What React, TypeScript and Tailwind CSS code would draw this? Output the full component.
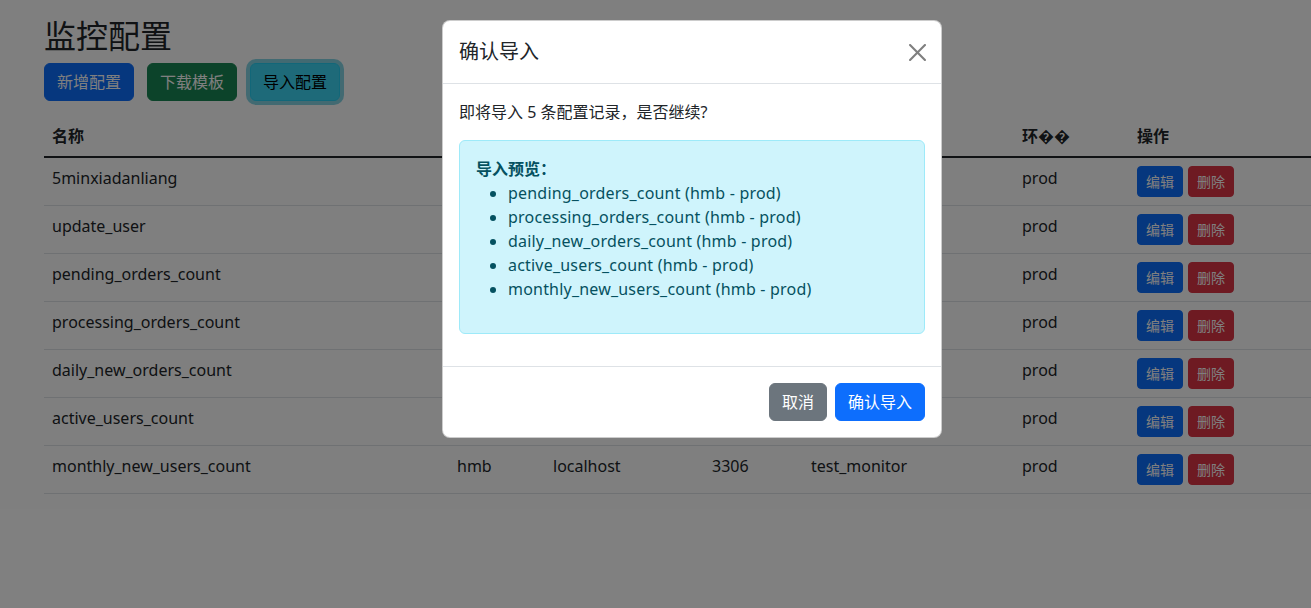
import React from 'react';

const font = { fontFamily: '"Noto Sans", "Noto Sans CJK SC", sans-serif' };

// only the last row shows its middle columns; the others sit behind the modal
const rows = [
  { name: '5minxiadanliang', full: false },
  { name: 'update_user', full: false },
  { name: 'pending_orders_count', full: false },
  { name: 'processing_orders_count', full: false },
  { name: 'daily_new_orders_count', full: false },
  { name: 'active_users_count', full: false },
  { name: 'monthly_new_users_count', full: true },
];

const preview = [
  'pending_orders_count (hmb - prod)',
  'processing_orders_count (hmb - prod)',
  'daily_new_orders_count (hmb - prod)',
  'active_users_count (hmb - prod)',
  'monthly_new_users_count (hmb - prod)',
];

const CloseIcon = () => (
  <svg viewBox="0 0 16 16" className="h-[17px] w-[17px]" fill="currentColor">
    <path d="M.293.293a1 1 0 0 1 1.414 0L8 6.586 14.293.293a1 1 0 1 1 1.414 1.414L9.414 8l6.293 6.293a1 1 0 0 1-1.414 1.414L8 9.414l-6.293 6.293a1 1 0 0 1-1.414-1.414L6.586 8 .293 1.707a1 1 0 0 1 0-1.414" />
  </svg>
);

const App = () => {
  return (
    <div className="relative h-[608px] w-[1311px] overflow-hidden bg-white text-[16px] leading-6 text-[#212529]" style={font}>
      {/* page */}
      <div className="pl-[44px] pt-[17px]">
        <h2 className="mb-2 text-[32px] leading-[1.2] font-normal">监控配置</h2>
        <div className="flex gap-[13px]">
          <button className="h-[38px] rounded-[6px] border border-[#0d6efd] bg-[#0d6efd] px-3 text-white">新增配置</button>
          <button className="h-[38px] rounded-[6px] border border-[#198754] bg-[#198754] px-3 text-white">下载模板</button>
          <button className="h-[38px] rounded-[6px] border border-[#25cff2] bg-[#3dd5f3] px-3 text-black shadow-[0_0_0_4px_rgba(11,172,204,0.5)]">导入配置</button>
        </div>
        <table className="mt-[15px] w-[1267px] table-fixed border-collapse text-left">
          <colgroup>
            <col className="w-[405px]" />
            <col className="w-[96px]" />
            <col className="w-[159px]" />
            <col className="w-[99px]" />
            <col className="w-[211px]" />
            <col className="w-[115px]" />
            <col />
          </colgroup>
          <thead>
            <tr className="border-b-2 border-[#212529]">
              <th className="p-2 font-bold">名称</th>
              <th className="p-2" />
              <th className="p-2" />
              <th className="p-2" />
              <th className="p-2" />
              <th className="p-2 font-bold">环��</th>
              <th className="p-2 font-bold">操作</th>
            </tr>
          </thead>
          <tbody>
            {rows.map((r) => (
              <tr key={r.name} className="border-b border-[#dee2e6] align-top">
                <td className="p-2">{r.name}</td>
                <td className="p-2">{r.full ? 'hmb' : ''}</td>
                <td className="p-2">{r.full ? 'localhost' : ''}</td>
                <td className="p-2">{r.full ? '3306' : ''}</td>
                <td className="p-2">{r.full ? 'test_monitor' : ''}</td>
                <td className="p-2">prod</td>
                <td className="p-2">
                  <div className="flex gap-[5px]">
                    <button className="h-[31px] rounded-[4px] border border-[#0d6efd] bg-[#0d6efd] px-2 text-[14px] text-white">编辑</button>
                    <button className="h-[31px] rounded-[4px] border border-[#dc3545] bg-[#dc3545] px-2 text-[14px] text-white">删除</button>
                  </div>
                </td>
              </tr>
            ))}
          </tbody>
        </table>
      </div>

      {/* backdrop */}
      <div className="absolute inset-0 bg-black/50" />

      {/* modal */}
      <div className="absolute left-[442px] top-[20px] w-[500px] rounded-[8px] border border-black/20 bg-white">
        <div className="flex items-center justify-between border-b border-[#dee2e6] p-4">
          <h5 className="text-[20px] leading-[30px] font-normal">确认导入</h5>
          <button className="mr-[-1px] text-black/50">
            <CloseIcon />
          </button>
        </div>
        <div className="p-4">
          <p className="mb-4">即将导入 5 条配置记录，是否继续?</p>
          <div className="mb-4 rounded-[6px] border border-[#9eeaf9] bg-[#cff4fc] p-4 text-[#055160]">
            <strong className="font-bold">导入预览：</strong>
            <ul className="mb-4 list-disc pl-8 tracking-[0.2px]">
              {preview.map((p) => (
                <li key={p}>{p}</li>
              ))}
            </ul>
          </div>
        </div>
        <div className="flex justify-end gap-2 border-t border-[#dee2e6] px-4 py-4">
          <button className="h-[38px] rounded-[6px] border border-[#6c757d] bg-[#6c757d] px-3 text-white">取消</button>
          <button className="h-[38px] rounded-[6px] border border-[#0d6efd] bg-[#0d6efd] px-3 text-white">确认导入</button>
        </div>
      </div>
    </div>
  );
};

export default App;
